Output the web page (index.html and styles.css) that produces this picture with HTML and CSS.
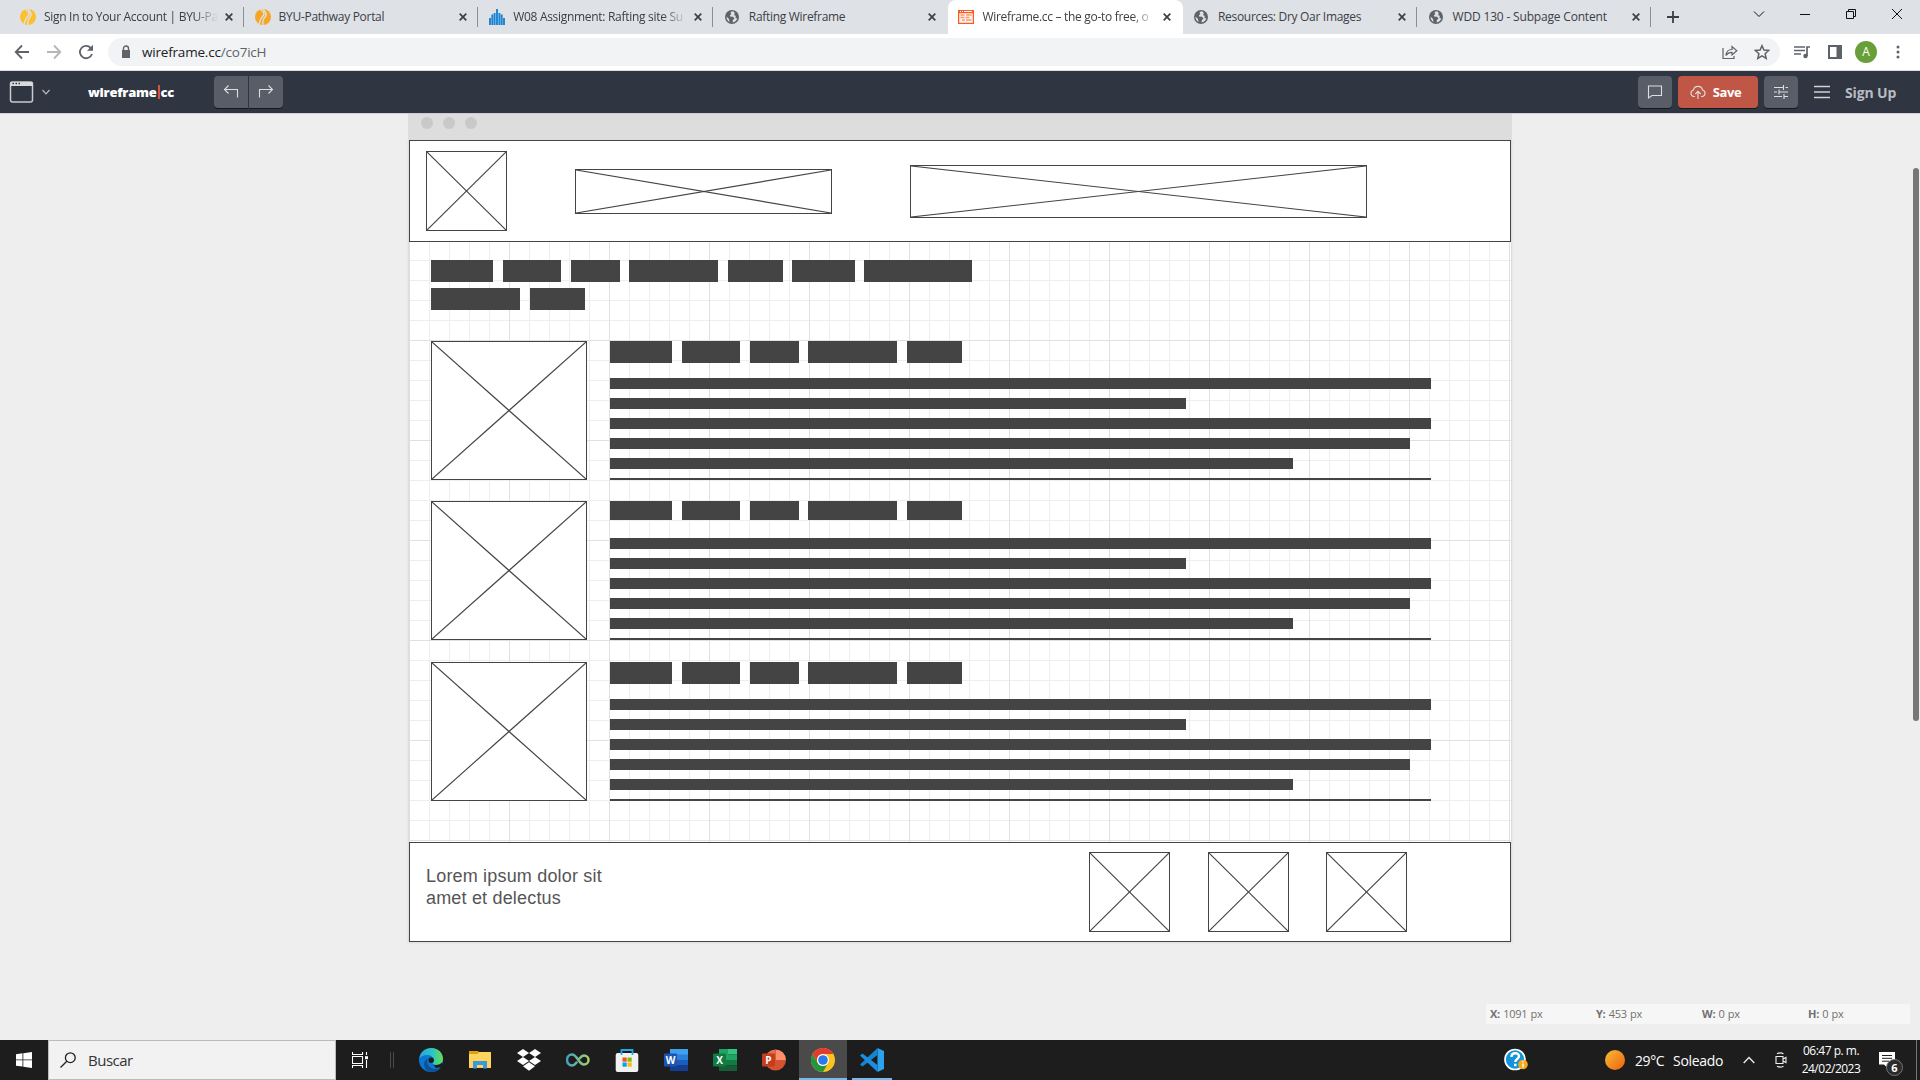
FILE: index.html
```html
<!DOCTYPE html>
<html lang="es">
<head>
<meta charset="utf-8">
<title>Wireframe.cc</title>
<link rel="stylesheet" href="styles.css">
</head>
<body>
<svg class="defs" aria-hidden="true">
  <linearGradient id="sun" x1="0" y1="0" x2="1" y2="1"><stop offset="0" stop-color="#f5bd3a"/><stop offset="1" stop-color="#f0610c"/></linearGradient>
  <linearGradient id="edgeTop" x1="0" y1="0" x2="1" y2="0"><stop offset="0" stop-color="#2aa5e0"/><stop offset=".55" stop-color="#2dc3c6"/><stop offset="1" stop-color="#67e04a"/></linearGradient>
  <linearGradient id="loop" x1="0" y1="0" x2="1" y2="0"><stop offset="0" stop-color="#3fa3c4"/><stop offset="1" stop-color="#a5d26a"/></linearGradient>
  <symbol id="path" viewBox="0 0 16 16"><circle cx="8" cy="8" r="8" fill="currentColor"/><path d="M5 0Q11 4 8 7T4 16M8 0Q13 5 10 8T8 16" fill="none" stroke="#dee1e6" stroke-width="1.4"/></symbol>
  <symbol id="globe" viewBox="0 0 14 14"><circle cx="7" cy="7" r="7" fill="#5f6368"/><path d="M7.500 1.300C5 2 5.500 3.500 6.500 4L5 5.200V6.600L8 6.800 9.500 8.500 8 10 7.500 12.500Q11 12 12.300 8.500L10.500 8 10.800 5.800 9 5.300 9.800 3.200Q9 1.500 7.500 1.300ZM1.500 6.500L4 9 4.500 12Q1.500 10.300 1.500 6.500Z" fill="#dee1e6"/></symbol>
  <symbol id="x" viewBox="0 0 8 8"><path d="M.7.7 7.300 7.300M7.300.7.7 7.300" stroke="#3c4043" stroke-width="1.700"/></symbol>
</svg>

<header class="tabs">
  <div class="tab"><svg class="fav gold" viewBox="0 0 16 16"><use href="#path"/></svg><span class="name faded">Sign In to Your Account | BYU-Pa</span><svg class="close"><use href="#x"/></svg></div>
  <div class="tab"><svg class="fav amber" viewBox="0 0 16 16"><use href="#path"/></svg><span class="name">BYU-Pathway Portal</span><svg class="close"><use href="#x"/></svg></div>
  <div class="tab"><svg class="fav" viewBox="0 0 16 16"><path d="M1 16V9M3.300 16V5.500M5.600 16V4M8 16V0M10.400 16V4M12.700 16V5.500M15 16V9" stroke="#1b83d2" stroke-width="1.900"/></svg><span class="name faded">W08 Assignment: Rafting site Su</span><svg class="close"><use href="#x"/></svg></div>
  <div class="tab"><svg class="fav globe"><use href="#globe"/></svg><span class="name">Rafting Wireframe</span><svg class="close"><use href="#x"/></svg></div>
  <div class="tab active"><svg class="fav" viewBox="0 0 16 16"><path d="M0 1h16v14H0z" fill="#fb5a1c"/><path d="M1.200 4.200h13.600v9.600H1.200z" fill="#fff3ec"/><path d="M2 2.500h1M4 2.500h1M6 2.500h8" stroke="#fff"/><path d="M2.500 6h4M8 6h5.500M2.500 8.500h4M7.500 8.500h4M4 11h3M8 11h5.500" stroke="#fb9a72" stroke-width="1.300"/></svg><span class="name faded">Wireframe.cc – the go-to free, o</span><svg class="close"><use href="#x"/></svg></div>
  <div class="tab"><svg class="fav globe"><use href="#globe"/></svg><span class="name">Resources: Dry Oar Images</span><svg class="close"><use href="#x"/></svg></div>
  <div class="tab"><svg class="fav globe"><use href="#globe"/></svg><span class="name roomy">WDD 130 - Subpage Content</span><svg class="close"><use href="#x"/></svg></div>
  <svg class="plus" viewBox="0 0 12 12"><path d="M6 0v12M0 6h12" stroke="#3c4043" stroke-width="1.800"/></svg>
  <div class="window-controls">
    <svg viewBox="0 0 12 12"><path d="M1 3.500l5 5 5-5" /></svg>
    <svg viewBox="0 0 12 12"><path d="M1 6.500h10"/></svg>
    <svg viewBox="0 0 12 12"><path d="M1.500 3.500h7v7h-7zM3.500 3.500v-2h7v7h-2"/></svg>
    <svg viewBox="0 0 12 12"><path d="M1 1l10 10M11 1 1 11"/></svg>
  </div>
</header>

<nav class="toolbar">
  <svg class="nav-icon" viewBox="0 0 16 16"><path d="M15 8H2M8 1.500 1.700 8 8 14.500" stroke="#5f6368"/></svg>
  <svg class="nav-icon" viewBox="0 0 16 16"><path d="M1 8h13M8 1.500 14.300 8 8 14.500" stroke="#b4b6b9"/></svg>
  <svg class="nav-icon" viewBox="0 0 16 16"><path d="M14 10A6.200 6.200 0 1 1 12.700 3.800" stroke="#5f6368"/><path d="M15 .8v6H9z" fill="#5f6368" stroke="none"/></svg>
  <div class="omnibox">
    <svg class="lock" viewBox="0 0 10 14"><path d="M1 5h8v8H1z" fill="#5f6368"/><path d="M2.500 6V3.500a2.500 2.500 0 0 1 5 0V6" fill="none" stroke="#5f6368" stroke-width="1.400"/></svg>
    <span class="url">wireframe.cc<span class="path">/co7icH</span></span>
    <svg class="share" viewBox="0 0 16 16"><path d="M1 4v10.500h11V12M4 11.500c.3-4 2.500-6 6-6V2.500l4.800 4.300L10 11V8.300c-3 0-4.500.8-6 3.200z"/></svg>
    <svg class="star" viewBox="0 0 16 16"><path d="M8 1.700l1.900 4.400 4.800.4-3.600 3.200 1.100 4.700L8 11.900l-4.200 2.500 1.100-4.700L1.300 6.500l4.800-.4z"/></svg>
  </div>
  <div class="extras">
    <svg viewBox="0 0 16 16"><path d="M0 3h11M0 6.500h11M0 10h7M13 12V3h3" fill="none" stroke="#5f6368" stroke-width="1.700"/><circle cx="11.500" cy="12" r="2.200" fill="#5f6368"/></svg>
    <svg viewBox="0 0 14 14"><path d="M1 1h12v12H1z" fill="none" stroke="#5f6368" stroke-width="2"/><path d="M8.500 1H13v12H8.500z" fill="#5f6368"/></svg>
    <span class="avatar">A</span>
    <svg class="kebab" viewBox="0 0 4 14"><circle cx="2" cy="2" r="1.500"/><circle cx="2" cy="7" r="1.500"/><circle cx="2" cy="12" r="1.500"/></svg>
  </div>
</nav>

<div class="appbar">
  <svg class="frame-icon" viewBox="0 0 24 22"><rect x="1" y="1" width="22" height="20" rx="2" fill="none" stroke="#c9cbce" stroke-width="1.500"/><path d="M1 1h22v4H1z" fill="#d8dadc"/><path d="M3 2.500h1.500M6 2.500h1.500M9 2.500h1.500" stroke="#2f3541" stroke-width="1.500"/></svg>
  <svg class="caret" viewBox="0 0 8 6"><path d="M.5 1 4 4.800 7.500 1" fill="none" stroke="#b9bcc1" stroke-width="1.200"/></svg>
  <span class="logo">wireframe<i></i>cc</span>
  <div class="history">
    <span class="btn left"><svg viewBox="0 0 16 16"><path d="M5.500 1.500 1.500 5.500l4 4M1.500 5.500H14.500v8"/></svg></span>
    <span class="btn right"><svg viewBox="0 0 16 16"><path d="M10.500 1.500l4 4-4 4M14.500 5.500H1.500v8"/></svg></span>
  </div>
  <div class="actions">
    <span class="btn"><svg viewBox="0 0 16 16"><path d="M1.500 2h13v9.500H5L1.500 14z"/></svg></span>
    <span class="btn save"><svg viewBox="0 0 16 16"><path d="M5 12.500H4a3.300 3.300 0 0 1-.5-6.500 4.600 4.600 0 0 1 9 0 3.300 3.300 0 0 1-.5 6.500h-1M8 15V7.500M5.300 10 8 7.300l2.700 2.700"/></svg>Save</span>
    <span class="btn"><svg viewBox="0 0 16 16"><path d="M1 3.500h9M12.500 3.500H15M10.500 1v5M1 8h3M6.500 8H15M6 5.500v5M1 12.500h8M11.500 12.500H15M11 10v5"/></svg></span>
    <svg class="burger" viewBox="0 0 16 14"><path d="M0 1.500h16M0 7h16M0 12.500h16" stroke="#d0d2d4" stroke-width="1.400"/></svg>
    <span class="signup">Sign Up</span>
  </div>
</div>

<main class="workspace">
  <div class="browser-top"><i></i><i></i><i></i></div>
  <div class="sheet">
    <div class="box banner">
      <svg class="pic logo-pic"><line x2="100%" y2="100%"/><line x1="100%" y2="100%"/></svg>
      <svg class="pic name-pic"><line x2="100%" y2="100%"/><line x1="100%" y2="100%"/></svg>
      <svg class="pic nav-pic"><line x2="100%" y2="100%"/><line x1="100%" y2="100%"/></svg>
    </div>
    <div class="gridded">
      <div class="words title"><i class="w1"></i><i class="w2"></i><i class="w3"></i><i class="w4"></i><i class="w5"></i><i class="w6"></i><i class="w7"></i></div>
      <div class="words second"><i class="w4"></i><i class="w5"></i></div>
      <div class="item first">
        <svg class="pic thumb"><line x2="100%" y2="100%"/><line x1="100%" y2="100%"/></svg>
        <div class="copy">
          <div class="words"><i class="w1"></i><i class="w2"></i><i class="w3"></i><i class="w4"></i><i class="w5"></i></div>
          <div class="lines"><b></b><b class="short"></b><b></b><b class="long"></b><b class="mid"></b><b class="cut"></b></div>
        </div>
      </div>
      <div class="item">
        <svg class="pic thumb"><line x2="100%" y2="100%"/><line x1="100%" y2="100%"/></svg>
        <div class="copy">
          <div class="words clipped"><i class="w1"></i><i class="w2"></i><i class="w3"></i><i class="w4"></i><i class="w5"></i></div>
          <div class="lines"><b></b><b class="short"></b><b></b><b class="long"></b><b class="mid"></b><b class="cut"></b></div>
        </div>
      </div>
      <div class="item last">
        <svg class="pic thumb"><line x2="100%" y2="100%"/><line x1="100%" y2="100%"/></svg>
        <div class="copy">
          <div class="words"><i class="w1"></i><i class="w2"></i><i class="w3"></i><i class="w4"></i><i class="w5"></i></div>
          <div class="lines"><b></b><b class="short"></b><b></b><b class="long"></b><b class="mid"></b><b class="cut"></b></div>
        </div>
      </div>
    </div>
    <div class="box foot">
      <p>Lorem ipsum dolor sit<br>amet et delectus</p>
      <div class="socials">
        <svg class="pic"><line x2="100%" y2="100%"/><line x1="100%" y2="100%"/></svg>
        <svg class="pic"><line x2="100%" y2="100%"/><line x1="100%" y2="100%"/></svg>
        <svg class="pic"><line x2="100%" y2="100%"/><line x1="100%" y2="100%"/></svg>
      </div>
    </div>
  </div>
  <div class="coords"><span><b>X:</b> 1091 px</span><span><b>Y:</b> 453 px</span><span><b>W:</b> 0 px</span><span><b>H:</b> 0 px</span></div>
  <div class="scrollbar"></div>
</main>

<footer class="taskbar">
  <div class="start"><svg viewBox="0 0 16 16"><path d="M0 2.200 6.500 1.300V7.500H0zM7.300 1.200 16 0v7.500H7.300zM0 8.300h6.500v6.300L0 13.700zM7.300 8.300H16V16l-8.700-1.200z" fill="#fff"/></svg></div>
  <div class="search"><svg viewBox="0 0 16 16"><circle cx="10.300" cy="5.700" r="4.900"/><path d="M6.800 9.200.5 15.500"/></svg>Buscar</div>
  <svg class="taskview" viewBox="0 0 16 16"><path d="M.5 0v2.500h10V0M.5 4.500h10v7H.5zM.5 16v-2.500h10V16M14.500 0v3M14.500 8v8" fill="none" stroke="#fff" stroke-width="1.100"/><path d="M13 4.200h3v3h-3z" fill="#fff"/></svg>
  <div class="divider"></div>
  <div class="apps">
    <span><svg viewBox="0 0 24 24"><circle cx="12" cy="12" r="12" fill="#0b78d0"/><path d="M.2 10.500C1.500 4 6.500 0 12.300 0 19.500 0 24 5.200 24 10.700c0 4-3 6.300-6.300 6.300-2.500 0-4.200-1-4.200-1.800 0-.8 1.200-1 1.200-3.200 0-2.500-2.500-5-6.200-5-4 0-7 1.700-8.300 3.500z" fill="url(#edgeTop)"/><path d="M8 12.500c0 5 4 8.500 9 8.500 2 0 4-.8 5-1.800C20 22.500 16.500 24 13 24c-5 0-8-3.500-8-7.500 0-3 2-5.800 5-6.700-1.300.8-2 1.700-2 2.700z" fill="#10509a"/><path d="M13.500 15.200c.3 1.600 3.500 2.400 6.500 1.400 1.600-.5 2.400-1.400 2.800-2L24 18l-2 1.200-5 .8z" fill="#1d1d1d"/><circle cx="12.200" cy="12.300" r="2.700" fill="#1d1d1d"/></svg></span>
    <span><svg viewBox="0 0 24 24"><path d="M1 3h9l1.500 2H23v15H1z" fill="#e3a008"/><path d="M1 6h8.500l1.500-2h12v16H1z" fill="#ffd45e"/><path d="M5 20.500V13h14v7.500h-4V17H9v3.500z" fill="#3c97dc"/></svg></span>
    <span><svg viewBox="0 0 24 24"><path d="M6 1l6 4-6 4-6-4zM18 1l6 4-6 4-6-4zM6 9l6 4-6 4-6-4zM18 9l6 4-6 4-6-4zM6 18.300l6-4 6 4-6 4.500z" fill="#fff"/></svg></span>
    <span><svg viewBox="0 0 24 24"><path d="M10.500 14.500C9 16.500 7.800 17.500 6 17.500a5 5.500 0 0 1 0-11c5.500 0 6.500 10 12 10a4.500 4.500 0 0 0 0-9c-2 0-3.300 1.500-4.500 3" fill="none" stroke="url(#loop)" stroke-width="2.500" stroke-linecap="round"/></svg></span>
    <span><svg viewBox="0 0 24 24"><path d="M6.500 7V2h11v5" fill="none" stroke="#22a9ea" stroke-width="1.800"/><rect x=".7" y="5" width="22.600" height="19" rx="2" fill="#f1f1f1"/><path d="M6.500 5v2M17.500 5v2" stroke="#22a9ea" stroke-width="1.800"/><path d="M7.500 9.500h4.200v4.200H7.500z" fill="#f1511b"/><path d="M12.500 9.500h4.200v4.200h-4.200z" fill="#80bb0a"/><path d="M7.500 14.500h4.200v4.200H7.500z" fill="#00a3ee"/><path d="M12.500 14.500h4.200v4.200h-4.200z" fill="#fbb912"/></svg></span>
    <span class="office word"><svg viewBox="0 0 24 24"><path d="M6 1h18v6H6z" fill="#3fa0ec"/><path d="M6 6.500h18V12H6z" fill="#2a7fd6"/><path d="M6 12h18v5.500H6z" fill="#1b5dbe"/><path d="M6 17.500h18V23H6z" fill="#133f90"/><rect y="5.500" width="13" height="13" rx="1" fill="#1a54b4"/></svg><em>W</em></span>
    <span class="office"><svg viewBox="0 0 24 24"><path d="M6 1h9v11H6z" fill="#21a366"/><path d="M15 1h9v5.500h-9z" fill="#33c481"/><path d="M15 6.500h9V12h-9z" fill="#21a366"/><path d="M6 12h18v5.500H6z" fill="#107c41"/><path d="M6 17.500h18V23H6z" fill="#185c37"/><rect y="5.500" width="13" height="13" rx="1" fill="#107c41"/></svg><em>X</em></span>
    <span class="office"><svg viewBox="0 0 24 24"><path d="M13.500 1.500A10.500 10.500 0 0 0 3 12h10.500z" fill="#ed6c47"/><path d="M13.500 1.500A10.500 10.500 0 0 1 24 12H13.500z" fill="#ff8f6b"/><path d="M3 12a10.500 10.500 0 0 0 21 0z" fill="#d35230"/><rect y="5.500" width="13" height="13" rx="1" fill="#c43e1c"/></svg><em>P</em></span>
    <span class="running"><svg viewBox="0 0 24 24"><circle cx="12" cy="12" r="12" fill="#fcc31c"/><path d="M1.600 6A12 12 0 0 1 22.400 6H12a6 6 0 0 0-5.200 9z" fill="#e33b2e"/><path d="M1.600 6A12 12 0 0 0 12 24l5.200-9A6 6 0 0 1 6.800 15z" fill="#25963f"/><circle cx="12" cy="12" r="6" fill="#fff"/><circle cx="12" cy="12" r="4.800" fill="#2b78ea"/></svg></span>
    <span class="open"><svg viewBox="0 0 24 24"><path d="M17.500 0 24 3v18l-6.500 3z" fill="#2ba2ee"/><path d="M17.500 0v7L2.500 18.500 0 16.500z" fill="#1684cf"/><path d="M0 7.500l2.500-2L17.500 17v7z" fill="#1a8fe0"/></svg></span>
  </div>
  <div class="tray">
    <svg class="help" viewBox="0 0 24 24"><circle cx="11" cy="11.500" r="10" fill="#1494d8" stroke="#fff" stroke-width="1.700"/><path d="M7.500 9c0-5 7.500-4.800 7.500-.7 0 2.700-3.700 2.700-3.700 5.700M11.300 15.800v2.500" fill="none" stroke="#fff" stroke-width="2.400"/><circle cx="19" cy="16.500" r="4.800" fill="#f5a91d"/><path d="M19 15.500v4M19 13v1.300" stroke="#fff" stroke-width="1.400"/></svg>
    <svg class="sun" viewBox="0 0 20 20"><circle cx="10" cy="10" r="10" fill="url(#sun)"/></svg>
    <span class="temp">29°C</span><span class="sky">Soleado</span>
    <svg class="up" viewBox="0 0 12 8"><path d="M.7 7 6 1.500 11.300 7"/></svg>
    <svg class="cam" viewBox="0 0 12 16"><path d="M1 4.500h7v7H1zM8 7l3-1.500v5L8 9M2 1.800Q5 0 8.500 1.800M2 14.200Q5 16 8.500 14.200"/></svg>
    <div class="clock"><span>06:47 p. m.</span><span>24/02/2023</span></div>
    <div class="notes"><svg viewBox="0 0 16 16"><path d="M0 0h16v12.500H8.500V16L5 12.500H0z" fill="#fff"/><path d="M3 3.500h10M3 6.300h10M3 9.200h7" stroke="#1d1d1d"/></svg><b>6</b></div>
    <div class="peek"></div>
  </div>
</footer>
</body>
</html>
```
FILE: styles.css
```css
* { box-sizing: border-box; }
body {
  margin: 0;
  width: 1920px;
  height: 1080px;
  overflow: hidden;
  display: grid;
  grid-template-rows: 34px 37px 42px 927px 40px;
  font-family: "Open Sans", "Noto Sans", sans-serif;
  background: #eee;
}
svg { display: block; flex: none; }
i { display: block; font-style: normal; }
.defs { position: absolute; width: 0; height: 0; }

/* browser tabs */
.tabs { display: flex; background: #dee1e6; padding-left: 10px; }
.tab {
  flex: none;
  width: 234.6px;
  height: 34px;
  display: flex;
  align-items: center;
  padding: 0 12px 0 10px;
  position: relative;
  font-size: 12px;
  letter-spacing: -0.3px;
  color: #3c4043;
}
.tab::after { content: ""; position: absolute; right: 1px; top: 7px; width: 1px; height: 20px; background: #8b8e93; }
.tab.active { background: #fff; border-radius: 8px 8px 0 0; }
.tab.active::after, .tab:has(+ .active)::after { display: none; }
.fav { width: 16px; height: 16px; margin-right: 8px; }
.fav.globe { width: 14px; height: 14px; margin: 0 10px 0 1px; }
.gold { color: #fbc02d; }
.amber { color: #f5a623; }
.name { white-space: nowrap; padding-bottom: 1px; }
.faded { -webkit-mask-image: linear-gradient(90deg, #000 150px, transparent 174px); mask-image: linear-gradient(90deg, #000 150px, transparent 174px); }
.roomy { letter-spacing: -0.18px; }
.close { width: 8px; height: 8px; margin-left: auto; }
.plus { width: 12px; height: 12px; margin: 11px 0 0 15px; }
.window-controls { display: flex; gap: 34px; margin: 8px 17px 0 auto; }
.window-controls svg { width: 12px; height: 12px; fill: none; stroke: #111; }

/* address row */
.toolbar { display: flex; align-items: center; background: #fff; border-bottom: 1px solid #d9dce0; padding-left: 14px; }
.nav-icon { width: 16px; height: 16px; margin-right: 16px; fill: none; stroke-width: 1.8; }
.omnibox { display: flex; align-items: center; width: 1672px; height: 28px; margin-left: -2px; border-radius: 14px; background: #f1f3f4; padding: 0 10px 0 13px; }
.lock { width: 10px; height: 14px; }
.url { margin-left: 11px; font-size: 13.5px; letter-spacing: -0.2px; color: #202124; }
.path { color: #5f6368; }
.share { width: 16px; height: 16px; margin-left: auto; fill: none; stroke: #5f6368; stroke-width: 1.2; }
.star { width: 16px; height: 16px; margin-left: 16px; fill: none; stroke: #5f6368; stroke-width: 1.5; }
.extras { display: flex; align-items: center; margin-left: 14px; }
.extras svg { width: 16px; height: 16px; }
.extras svg + svg { width: 14px; height: 14px; margin-left: 18px; }
.avatar { width: 22px; height: 22px; margin-left: 13px; border-radius: 50%; background: #689f38; color: #fff; font-size: 12px; line-height: 22px; text-align: center; }
.extras .kebab { width: 4px; height: 14px; margin-left: 19px; fill: #5f6368; }

/* editor bar */
.appbar { display: flex; align-items: center; background: #2f3541; padding: 0 23px 0 9px; }
.frame-icon { width: 25px; height: 22px; }
.caret { width: 8px; height: 6px; margin-left: 8px; }
.logo { display: flex; align-items: center; width: 86px; margin-left: 38px; color: #fff; font-size: 13px; font-weight: 800; letter-spacing: -0.25px; }
.logo i { width: 2px; height: 14px; background: #d4553f; margin: 0 1px; flex: none; }
.history { display: flex; gap: 1px; margin-left: 40px; }
.btn { display: flex; align-items: center; justify-content: center; width: 34px; height: 32px; border-radius: 4px; background: #595d67; box-shadow: 0 1px 0 #15181d; }
.btn svg { width: 16px; height: 16px; fill: none; stroke: #dcdee0; stroke-width: 1.1; }
.btn.left { border-radius: 4px 0 0 4px; }
.btn.right { border-radius: 0 4px 4px 0; }
.actions { display: flex; align-items: center; gap: 6px; margin-left: auto; }
.btn.save { width: 80px; gap: 7px; padding-right: 5px; background: #c05746; color: #fff; font-size: 13px; font-weight: 700; letter-spacing: -0.4px; }
.burger { width: 16px; height: 14px; margin-left: 10px; }
.signup { width: 52px; margin-left: 9px; color: #b9bcc0; font-size: 14px; font-weight: 700; letter-spacing: -0.15px; white-space: nowrap; }

/* canvas */
.workspace { position: relative; padding-left: 408px; background: #eee; box-shadow: inset 0 1px 0 #d5d0dc; }
.browser-top { display: flex; gap: 10px; width: 1104px; height: 27px; padding: 4px 0 0 13px; background: #ddd; box-shadow: inset 0 1px 0 #cfcbd4; }
.browser-top i { width: 12px; height: 12px; border-radius: 50%; background: #c9c9c9; }
.sheet { width: 1104px; border: solid #ddd; border-width: 0 1px; background: #fff; box-shadow: 0 1px 2px #ddd; }
.box { display: flex; border: 1px solid #444; background: #fff; }
.pic { border: 1px solid #444; background: #fff; stroke: #444; stroke-width: 1.15; }
.banner { height: 102px; padding-left: 16px; }
.logo-pic { width: 81px; height: 80px; margin-top: 10px; }
.name-pic { width: 257px; height: 45px; margin: 28px 0 0 68px; }
.nav-pic { width: 457px; height: 53px; margin: 24px 0 0 78px; }
.gridded {
  height: 600px;
  padding: 18px 0 0 22px;
  background-image:
    linear-gradient(90deg, transparent 99px, #e0e0e0 99px),
    linear-gradient(transparent 99px, #e0e0e0 99px),
    linear-gradient(90deg, transparent 19px, #eee 19px),
    linear-gradient(transparent 19px, #eee 19px);
  background-size: 100px 100px, 100px 100px, 20px 20px, 20px 20px;
  background-position: 1px -1px;
}
.words { display: flex; height: 22px; }
.words i { background: #444; }
.w1 { width: 62px; margin-right: 10px; }
.w2 { width: 58px; margin-right: 10px; }
.w3 { width: 49px; margin-right: 9px; }
.w4 { width: 89px; margin-right: 10px; }
.w5 { width: 55px; margin-right: 9px; }
.w6 { width: 63px; margin-right: 9px; }
.w7 { width: 108px; }
.second { margin-top: 6px; }
.item { display: flex; height: 139px; margin-top: 21px; }
.item.first { margin-top: 31px; }
.item.last { margin-top: 22px; }
.thumb { width: 156px; height: 139px; }
.copy { width: 821px; margin-left: 23px; }
.clipped i { height: 19px; }
.lines { display: grid; grid-template-rows: repeat(5, 11px) 2px; row-gap: 9px; margin-top: 15px; }
.lines b { background: #444; }
.lines .short { width: 576px; }
.lines .long { width: 800px; }
.lines .mid { width: 683px; }
.foot { height: 100px; padding-left: 16px; }
.foot p { width: 663px; margin: 22px 0 0; font: 18px/22px "Liberation Sans", sans-serif; color: #555; letter-spacing: 0.18px; }
.socials { display: flex; gap: 38px; padding-top: 9px; }
.socials .pic { width: 81px; height: 80px; }
.socials .pic:last-child { margin-left: -1px; }
.coords { position: absolute; right: 10px; top: 891px; display: grid; grid-template-columns: repeat(4, 106px); width: 424px; height: 20px; padding-left: 4px; background: #f6f6f6; color: #707070; font-size: 11px; line-height: 20px; letter-spacing: -0.25px; word-spacing: 0.6px; }
.scrollbar { position: absolute; right: 1px; top: 55px; width: 6px; height: 553px; border-radius: 3px; background: #777; }

/* taskbar */
.taskbar { display: flex; align-items: center; background: #1d1d1d; color: #fff; }
.start { width: 48px; padding-left: 16px; }
.start svg { width: 16px; height: 16px; }
.search { display: flex; align-items: center; width: 288px; height: 40px; padding-left: 11px; border: 1px solid #bbb; background: #f2f2f2; color: #333; font-size: 15px; letter-spacing: -0.5px; }
.search svg { width: 16px; height: 16px; margin-right: 12px; fill: none; stroke: #222; stroke-width: 1.3; }
.taskview { width: 16px; height: 16px; margin-left: 16px; }
.divider { width: 4px; height: 16px; margin-left: 22px; border: solid #4a4a4a; border-width: 0 1px; }
.apps { display: flex; gap: 1px; margin-left: 13px; }
.apps span { display: flex; align-items: center; justify-content: center; width: 48px; height: 40px; position: relative; }
.apps svg { width: 24px; height: 24px; }
.apps em { position: absolute; left: 12px; top: 13px; width: 13px; font-size: 10px; line-height: 14px; font-style: normal; font-weight: 700; text-align: center; }
.apps .running { background: #4a4a4a; box-shadow: inset 0 -2px 0 #76b9ed; }
.open::after { content: ""; position: absolute; left: 4px; right: 4px; bottom: 0; height: 2px; background: #76b9ed; }
.tray { display: flex; align-items: center; height: 40px; margin-left: auto; font-size: 14px; }
.help { width: 24px; height: 24px; margin-right: 77px; }
.sun { width: 20px; height: 20px; margin-right: 10px; }
.temp { width: 38px; letter-spacing: -0.4px; white-space: nowrap; }
.sky { width: 60px; letter-spacing: -0.3px; }
.up { width: 12px; height: 8px; margin-left: 10px; fill: none; stroke: #eee; stroke-width: 1.3; }
.cam { width: 12px; height: 16px; margin-left: 20px; fill: none; stroke: #eee; stroke-width: 1.1; }
.clock { display: grid; width: 60px; margin-left: 14px; font-size: 12px; line-height: 18px; letter-spacing: -0.5px; text-align: center; white-space: nowrap; }
.notes { position: relative; width: 16px; height: 16px; margin-left: 18px; }
.notes svg { width: 16px; height: 16px; }
.notes b { position: absolute; left: 7px; top: 7px; width: 17px; height: 17px; border: 1px solid #777; border-radius: 50%; background: #2b2b2b; font-size: 11px; line-height: 15px; text-align: center; }
.peek { width: 4px; height: 40px; margin-left: 21px; border-left: 1px solid #777; }
```
